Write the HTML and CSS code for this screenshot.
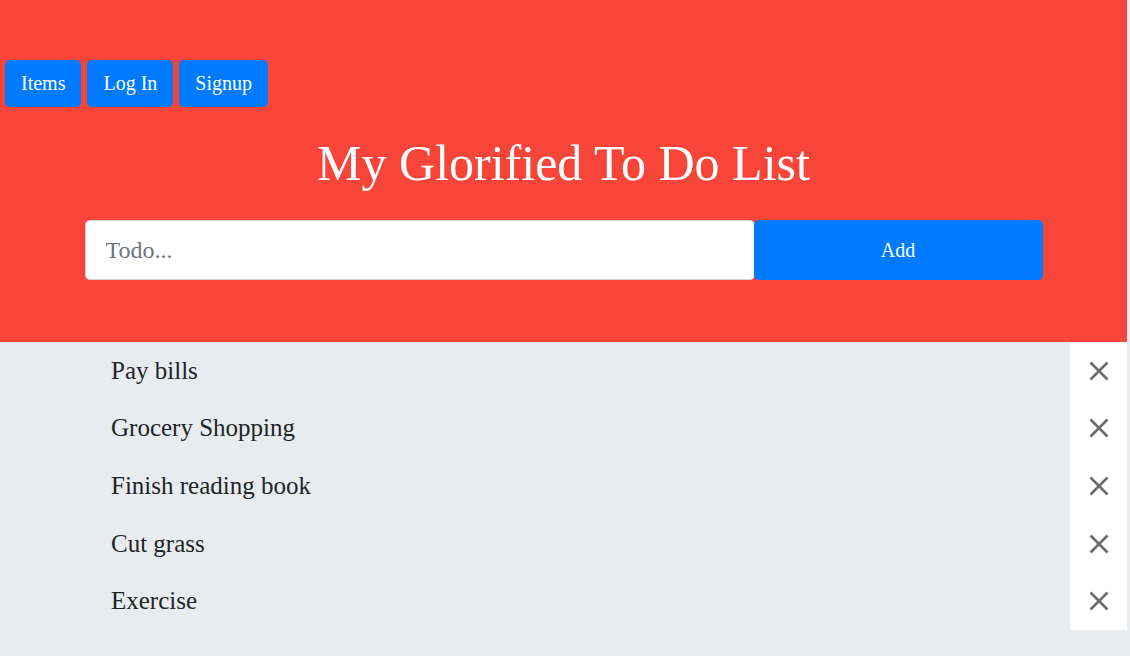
FILE: index.html
```html
<!DOCTYPE html>
<html lang="en">
<head>
<meta charset="utf-8">
<title>My Glorified To Do List</title>
<link rel="stylesheet" href="styles.css">
</head>
<body>
<div class="page">
  <header class="hero">
    <nav class="nav">
      <button class="btn">Items</button>
      <button class="btn">Log In</button>
      <button class="btn">Signup</button>
    </nav>
    <h1 class="title">My Glorified To Do List</h1>
    <form class="todo-form">
      <input class="todo-input" type="text" placeholder="Todo...">
      <button class="btn add-btn" type="button">Add</button>
    </form>
  </header>
  <ul class="list">
    <li class="row"><span class="item">Pay bills</span><span class="del"><svg viewBox="0 0 20 20" width="20" height="20"><path d="M1.5 1.5L18.5 18.5M18.5 1.5L1.5 18.5"/></svg></span></li>
    <li class="row"><span class="item">Grocery Shopping</span><span class="del"><svg viewBox="0 0 20 20" width="20" height="20"><path d="M1.5 1.5L18.5 18.5M18.5 1.5L1.5 18.5"/></svg></span></li>
    <li class="row"><span class="item">Finish reading book</span><span class="del"><svg viewBox="0 0 20 20" width="20" height="20"><path d="M1.5 1.5L18.5 18.5M18.5 1.5L1.5 18.5"/></svg></span></li>
    <li class="row"><span class="item">Cut grass</span><span class="del"><svg viewBox="0 0 20 20" width="20" height="20"><path d="M1.5 1.5L18.5 18.5M18.5 1.5L1.5 18.5"/></svg></span></li>
    <li class="row"><span class="item">Exercise</span><span class="del"><svg viewBox="0 0 20 20" width="20" height="20"><path d="M1.5 1.5L18.5 18.5M18.5 1.5L1.5 18.5"/></svg></span></li>
  </ul>
</div>
</body>
</html>
```

FILE: styles.css
```css
html, body {
  margin: 0;
  padding: 0;
  background: #e9ecef;
  font-family: "Liberation Serif", "Times New Roman", serif;
  color: #212529;
}

.page {
  width: 1127px;
}

.hero {
  background: #f74539;
  padding: 60px 0 62px;
}

.nav {
  display: flex;
  gap: 6px;
  padding-left: 5px;
}

.btn {
  font-family: "Liberation Serif", "Times New Roman", serif;
  font-size: 20px;
  line-height: 31px;
  padding: 8px 16px;
  border: 0;
  border-radius: 4.8px;
  background: #007bff;
  color: #fff;
  cursor: pointer;
}

.title {
  margin: 26px 0 27px;
  text-align: center;
  font-size: 50px;
  line-height: 60px;
  font-weight: normal;
  color: #fff;
}

.todo-form {
  display: flex;
  width: 958px;
  margin: 0 auto;
}

.todo-input {
  box-sizing: border-box;
  width: 670px;
  height: 60px;
  padding: 12px 20px;
  font-family: "Liberation Serif", "Times New Roman", serif;
  font-size: 24px;
  border: 1px solid #ced4da;
  border-radius: 4.8px;
  background: #fff;
  color: #495057;
  outline: none;
}

.todo-input::placeholder {
  color: #6c757d;
}

.add-btn {
  box-sizing: border-box;
  width: 289px;
  height: 60px;
  margin-left: -1px;
  padding: 0;
}

.list {
  list-style: none;
  margin: 0;
  padding: 0;
}

.row {
  display: flex;
  align-items: stretch;
  height: 57.6px;
}

.item {
  flex: 1;
  display: flex;
  align-items: center;
  padding-left: 111px;
  font-size: 25px;
}

.del {
  width: 57px;
  background: #fff;
  display: flex;
  align-items: center;
  justify-content: center;
}

.del svg path {
  stroke: #6c6c6c;
  stroke-width: 2.6;
  fill: none;
}
```
